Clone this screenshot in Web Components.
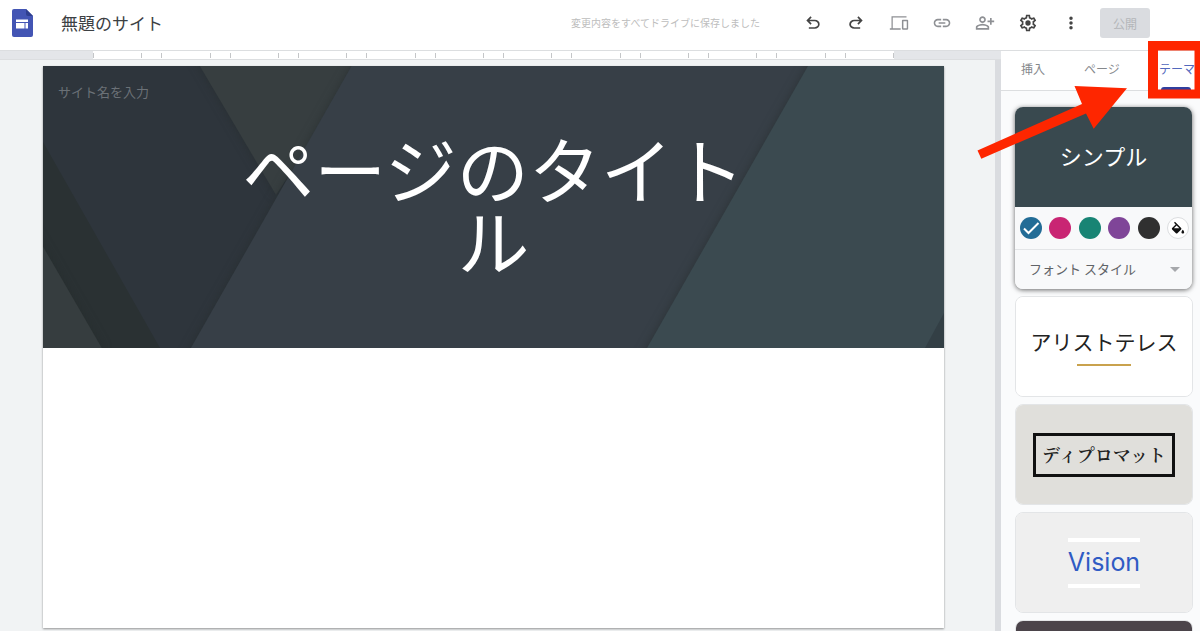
<!DOCTYPE html>
<html lang="ja">
<head>
<meta charset="utf-8">
<title>無題のサイト</title>
<style>
html, body { margin: 0; height: 100%; }
body { overflow: hidden; font-family: "Noto Sans CJK JP", "Noto Sans", sans-serif; color: #3c4043; background: #f1f3f4; }
</style>
</head>
<body>
<sites-app></sites-app>
<script>
const define = (name, html, setup) => customElements.define(name, class extends HTMLElement {
  constructor() {
    super();
    this.attachShadow({ mode: 'open' }).innerHTML = '<style>*{box-sizing:border-box}button,input,select{font-family:inherit;margin:0}</style>' + html;
  }
  connectedCallback() { if (setup) setup(this, this.shadowRoot); }
});

const ICONS = {
  undo: ['0 -960 960 960', 'M280-200v-80h284q63 0 109.5-40T720-420q0-60-46.5-100T564-560H312l104 104-56 56-200-200 200-200 56 56-104 104h252q97 0 169.5 63T800-420q0 94-72.5 157T564-200H280Z'],
  redo: ['0 -960 960 960', 'M396-200q-97 0-169.500-63T154-420q0-94 72.500-157T396-640h252L544-744l56-56 200 200-200 200-56-56 104-104H396q-63 0-109.500 40T240-420q0 60 46.500 100T396-280h284v80H396Z'],
  preview: ['0 0 24 24', 'M4.500 5.500H21V4H3v14.200H1V20h13v-1.800H4.500ZM22 8h-5.500c-.6 0-1 .4-1 1v10c0 .6.4 1 1 1H22c.6 0 1-.4 1-1V9c0-.6-.4-1-1-1Zm-.7 10.200h-4V9.800h4Z'],
  link: ['0 0 24 24', 'M3.9 12c0-1.710 1.390-3.100 3.100-3.100h4V7H7c-2.760 0-5 2.240-5 5s2.240 5 5 5h4v-1.900H7c-1.710 0-3.100-1.390-3.100-3.100zM8 13h8v-2H8v2zm9-6h-4v1.900h4c1.710 0 3.100 1.390 3.100 3.100s-1.390 3.100-3.100 3.100h-4V17h4c2.760 0 5-2.240 5-5s-2.240-5-5-5z'],
  share: ['0 -960 960 960', 'M720-400v-120H600v-80h120v-120h80v120h120v80H800v120h-80Zm-360-80q-66 0-113-47t-47-113q0-66 47-113t113-47q66 0 113 47t47 113q0 66-47 113t-113 47ZM40-160v-112q0-34 17.500-62.500T104-378q62-31 126-46.500T360-440q66 0 130 15.500T616-378q29 15 46.500 43.500T680-272v112H40Zm80-80h480v-32q0-11-5.500-20T580-306q-54-27-109-40.500T360-360q-56 0-111 13.500T140-306q-9 5-14.500 14t-5.500 20v32Zm240-320q33 0 56.500-23.500T440-640q0-33-23.500-56.500T360-720q-33 0-56.500 23.500T280-640q0 33 23.500 56.500T360-560Z'],
  settings: ['0 0 24 24', 'M19.430 12.980c.04-.32.07-.64.07-.98 0-.34-.03-.66-.07-.98l2.110-1.650c.19-.15.24-.42.12-.64l-2-3.460c-.09-.16-.26-.25-.44-.25-.06 0-.12.01-.17.03l-2.490 1c-.52-.4-1.080-.73-1.690-.98l-.38-2.650C14.460 2.180 14.250 2 14 2h-4c-.25 0-.46.18-.49.42l-.38 2.650c-.61.25-1.170.59-1.690.98l-2.490-1c-.06-.02-.12-.03-.18-.03-.17 0-.34.09-.43.25l-2 3.460c-.13.22-.07.49.12.64l2.110 1.650c-.04.32-.07.65-.07.98 0 .33.03.66.07.98l-2.110 1.650c-.19.15-.24.42-.12.64l2 3.460c.09.16.26.25.44.25.06 0 .12-.01.17-.03l2.490-1c.52.4 1.080.73 1.690.98l.38 2.650c.03.24.24.42.49.42h4c.25 0 .46-.18.49-.42l.38-2.650c.61-.25 1.170-.59 1.690-.98l2.490 1c.06.02.12.03.18.03.17 0 .34-.09.43-.25l2-3.460c.12-.22.07-.49-.12-.64l-2.110-1.650zm-1.980-1.710c.04.31.05.52.05.73 0 .21-.02.43-.05.73l-.14 1.130.89.7 1.080.84-.7 1.210-1.270-.51-1.040-.42-.9.68c-.43.32-.84.56-1.250.73l-1.060.43-.16 1.130-.2 1.350h-1.400l-.19-1.350-.16-1.130-1.060-.43c-.43-.18-.83-.41-1.230-.71l-.91-.7-1.060.43-1.270.51-.7-1.210 1.080-.84.89-.7-.14-1.130c-.03-.31-.05-.54-.05-.74s.02-.43.05-.73l.14-1.130-.89-.7-1.080-.84.7-1.210 1.270.51 1.040.42.9-.68c.43-.32.84-.56 1.250-.73l1.060-.43.16-1.130.2-1.350h1.390l.19 1.350.16 1.130 1.060.43c.43.18.83.41 1.230.71l.91.7 1.060-.43 1.270-.51.7 1.210-1.070.85-.89.7.14 1.130zM12 8.800a3.200 3.200 0 1 0 0 6.400a3.200 3.200 0 0 0 0-6.400z'],
  more: ['0 0 24 24', 'M12 8.300a2.100 2.100 0 1 0 0-4.200a2.100 2.100 0 0 0 0 4.200zm0 1.600a2.100 2.100 0 1 0 0 4.200a2.100 2.100 0 0 0 0-4.200zm0 5.800a2.100 2.100 0 1 0 0 4.200a2.100 2.100 0 0 0 0-4.200z']
};

define('icon-button', `
<style>
:host { display: block; width: 20px; height: 20px; color: #444; }
:host([muted]) { color: #8e9094; }
button { display: block; width: 100%; height: 100%; padding: 0; border: 0; background: none; color: inherit; }
svg { display: block; width: 100%; height: 100%; fill: currentColor; }
</style>
<button type="button"><svg aria-hidden="true"><path/></svg></button>`, (el, root) => {
  const [box, d] = ICONS[el.getAttribute('icon')];
  root.querySelector('svg').setAttribute('viewBox', box);
  root.querySelector('path').setAttribute('d', d);
  root.querySelector('button').setAttribute('aria-label', el.getAttribute('label'));
});

define('top-bar', `
<style>
:host { display: flex; align-items: center; height: 51px; padding: 0 50px 4px 12px; background: #fff; border-bottom: 1px solid #dcdee0; box-sizing: border-box; flex: none; }
.logo { width: 21px; height: 28px; flex: none; }
input { flex: 1; min-width: 0; margin-left: 28px; padding: 0; border: 0; background: none; font-size: 17px; line-height: 26px; color: #3c4043; outline: 0; }
.status { font-size: 10px; line-height: 16px; color: #bdbdbd; margin-right: 43px; white-space: nowrap; }
.tools { display: flex; gap: 23px; margin-right: 19px; }
.publish { width: 50px; height: 30px; padding: 0; border: 0; border-radius: 3px; background: #dadce0; color: #b4b6b9; font-size: 12px; }
</style>
<svg class="logo" viewBox="0 0 21 28" role="img" aria-label="サイト">
  <path fill="#4355b4" d="M2 0H14L21 7V26a2 2 0 0 1-2 2H2a2 2 0 0 1-2-2V2a2 2 0 0 1 2-2Z"/>
  <path fill="#2f3f8f" d="M14 0l7 7h-5a2 2 0 0 1-2-2Z"/>
  <path fill="#fff" d="M4 10.500H16V13H4ZM4 14H12.500V19.500H4ZM13.500 14H16V19.500H13.500Z"/>
</svg>
<input type="text" value="無題のサイト" aria-label="サイトのドキュメント名">
<span class="status">変更内容をすべてドライブに保存しました</span>
<div class="tools">
  <icon-button icon="undo" label="元に戻す"></icon-button>
  <icon-button icon="redo" label="やり直す"></icon-button>
  <icon-button muted icon="preview" label="プレビュー"></icon-button>
  <icon-button muted icon="link" label="リンクをコピー"></icon-button>
  <icon-button muted icon="share" label="共有"></icon-button>
  <icon-button icon="settings" label="設定"></icon-button>
  <icon-button icon="more" label="その他"></icon-button>
</div>
<button class="publish" type="button" disabled>公開</button>`);

define('column-ruler', `
<style>
:host { display: block; flex: none; height: 9px; padding: 0 107px 0 93px; background: #e4e6e9; border-bottom: 1px solid #dcdee0; box-sizing: border-box; }
div { display: grid; grid-template-columns: repeat(12, 1fr); column-gap: 19px; align-items: center; height: 8px; background: #fff; }
i { height: 5px; border: solid #c4c6c8; border-width: 0 1px; }
</style>
<div>${'<i></i>'.repeat(12)}</div>`);

define('site-hero', `
<style>
:host { display: grid; position: relative; background: #373f47; color: #fff; padding: 16px 15px 73px; }
svg { position: absolute; inset: 0; width: 100%; height: 100%; }
input { position: relative; justify-self: start; width: 160px; padding: 0; border: 0; background: none; color: #fff; font-size: 13px; line-height: 20px; outline: 0; }
input::placeholder { color: #6b7177; opacity: 1; }
h1 { position: relative; justify-self: center; width: 512px; margin: 29px 0 0; font-size: 72px; line-height: 72px; font-weight: 400; text-align: center; word-break: break-all; }
</style>
<svg viewBox="0 0 901 282" preserveAspectRatio="none" aria-hidden="true">
  <defs><filter id="s" filterUnits="userSpaceOnUse" x="-60" y="-60" width="1020" height="400" color-interpolation-filters="sRGB"><feDropShadow dx="0" dy="0" stdDeviation="5" flood-color="#252b2c" flood-opacity=".6"/></filter></defs>
  <path fill="#2e353c" d="M0 0H310V282H0Z"/>
  <path fill="#2a3133" d="M0 76L117 282H0Z"/>
  <path fill="#363d3f" filter="url(#s)" d="M-20 146L60 284H-20Z"/>
  <path fill="#373e40" filter="url(#s)" d="M145-20H330L233 129Z"/>
  <path fill="#373f47" filter="url(#s)" d="M320-20H920V300H137.600Z"/>
  <path fill="#3b4a50" filter="url(#s)" d="M776.400-20H940V300H593.700Z"/>
  <path fill="#333f45" d="M901 247V282H882Z"/>
</svg>
<input type="text" placeholder="サイト名を入力" aria-label="サイト名を入力">
<h1>ページのタイトル</h1>`);

define('page-canvas', `
<style>
:host { display: flex; flex: 1; min-width: 0; min-height: 0; flex-direction: column; background: #f1f3f4; }
.scroll { display: flex; flex: 1; min-height: 0; padding: 6px 51px 3px 43px; border-right: 6px solid #dadce0; }
article { flex: 1; min-width: 0; background: #fff; box-shadow: 0 1px 2px #0006; }
</style>
<column-ruler></column-ruler>
<div class="scroll"><article><site-hero></site-hero></article></div>`);

define('theme-card', `
<style>
:host { display: block; flex: none; border-radius: 8px; overflow: hidden; border: 1px solid #e3e5e7; box-sizing: border-box; }
:host([selected]) { border: 0; box-shadow: 0 1px 5px #0009; }
button { display: flex; flex-direction: column; align-items: center; justify-content: center; width: 100%; height: 99px; padding: 0 0 4px; border: 0; background: var(--bg, #fff); color: var(--fg, #222); font-size: var(--size, 21px); line-height: 30px; }
:host([selected]) button { height: 100px; }
</style>
<button type="button"><slot></slot></button><slot name="options"></slot>`);

define('theme-options', `
<style>
:host { display: block; background: #f8f9fa; }
fieldset { display: flex; justify-content: space-between; align-items: center; height: 43px; margin: 0; padding: 0 3px 0 5px; border: 0; border-bottom: 1px solid #e3e5e7; min-width: 0; }
label { position: relative; display: block; width: 22px; height: 22px; }
input { appearance: none; display: block; width: 22px; height: 22px; border-radius: 50%; background: var(--c); border: 1px solid var(--b, transparent); background-clip: border-box; background-origin: border-box; }
svg { position: absolute; inset: 0; width: 22px; height: 22px; pointer-events: none; }
.font { position: relative; display: flex; align-items: center; height: 39px; }
select { appearance: none; width: 100%; height: 100%; padding: 0 14px 2px; border: 0; background: none; color: #606367; font-size: 13px; }
.font svg { inset: auto 12px auto auto; width: 10px; height: 5px; fill: #a6a8ab; }
</style>
<fieldset aria-label="テーマの色">
  <label style="--c:#226c96"><input type="radio" name="c" checked aria-label="青"><svg viewBox="0 0 22 22"><path d="M4 11.500l4.500 4.500L18.500 6" fill="none" stroke="#fff" stroke-width="2"/></svg></label>
  <label style="--c:#c92573"><input type="radio" name="c" aria-label="ピンク"></label>
  <label style="--c:#188474"><input type="radio" name="c" aria-label="緑"></label>
  <label style="--c:#7f4598"><input type="radio" name="c" aria-label="紫"></label>
  <label style="--c:#303030"><input type="radio" name="c" aria-label="黒"></label>
  <label style="--c:#fff;--b:#dcdee0"><input type="radio" name="c" aria-label="カスタム"><svg viewBox="-4 -4 32 32"><path d="M16.560 8.940L7.620 0 6.210 1.410l2.380 2.380-5.150 5.150c-.59.59-.59 1.540 0 2.120l5.500 5.500c.29.29.68.44 1.060.44s.77-.15 1.060-.44l5.500-5.500c.59-.58.59-1.530 0-2.120zM6 9.500L10 5.500 14 9.500ZM19 11.500s-2 2.170-2 3.500c0 1.100.9 2 2 2s2-.9 2-2c0-1.330-2-3.500-2-3.500z" transform="translate(0 3)" fill="#111"/></svg></label>
</fieldset>
<div class="font"><select aria-label="フォント スタイル"><option>フォント スタイル</option></select><svg viewBox="0 0 10 5" aria-hidden="true"><path d="M0 0h10L5 5Z"/></svg></div>`);

define('callout-arrow', `
<style>
:host { position: absolute; right: 0; top: -10px; width: 223px; height: 120px; pointer-events: none; }
svg { display: block; width: 100%; height: 100%; fill: #fe2600; }
</style>
<svg viewBox="977 41 223 120" aria-hidden="true">
  <path fill-rule="evenodd" d="M1148 41H1200V98.500H1148ZM1158 50.500V89.500H1194.500V50.500Z"/>
  <path d="M977.500 150.500L1082 104L1074.500 86L1127 88.300L1093.700 128.700L1086 113.500L981.300 158.700Z"/>
</svg>`);

define('theme-panel', `
<style>
:host { display: flex; flex-direction: column; position: relative; flex: none; width: 199px; background: #fafbfc; }
nav { display: flex; flex: none; height: 40px; background: #fff; border-bottom: 1px solid #dcdee0; padding-left: 6px; }
nav button { flex: none; width: 52px; padding: 0 0 4px; border: 0; background: none; font-size: 12px; color: #85888c; }
nav button:nth-child(2) { width: 86px; }
nav button[aria-selected=true] { position: relative; width: 55px; padding-left: 14px; color: #5268bd; text-align: left; white-space: nowrap; }
nav button[aria-selected=true]::after { content: ""; position: absolute; left: 16px; right: 9px; bottom: 0; height: 3px; border-radius: 3px 3px 0 0; background: #303f9f; }
.list { display: flex; flex: 1; min-height: 0; flex-direction: column; gap: 7px; padding: 16px 7px 0 14px; overflow: hidden; }
.simple { --bg: #39494f; --fg: #fff; --size: 22px; margin-right: 1px; }
.gold { width: 54px; height: 2px; margin: 8px 0 -2px; background: #c9a24d; }
.diplomat { --bg: #e0dfdb; --size: 18px; }
.frame { margin-top: 4px; padding: 3px 6px 5px; border: 3px solid #111; font-family: "Noto Serif CJK JP", "Noto Sans CJK JP", serif; font-weight: 600; }
.vision { --bg: #efefef; --fg: #2f5bc4; --size: 25px; }
.bars { margin-top: 4px; padding: 5px 0 7px; border: solid #fff; border-width: 4px 0; font-family: Inter, sans-serif; font-weight: 400; }
.dark { --bg: #4b444a; }
</style>
<nav role="tablist" aria-label="パネル">
  <button type="button" role="tab">挿入</button>
  <button type="button" role="tab">ページ</button>
  <button type="button" role="tab" aria-selected="true">テーマ</button>
</nav>
<div class="list">
  <theme-card class="simple" selected>シンプル<theme-options slot="options"></theme-options></theme-card>
  <theme-card>アリストテレス<span class="gold"></span></theme-card>
  <theme-card class="diplomat"><span class="frame">ディプロマット</span></theme-card>
  <theme-card class="vision"><span class="bars">Vision</span></theme-card>
  <theme-card class="dark"></theme-card>
</div>
<callout-arrow></callout-arrow>`);

define('sites-app', `
<style>
:host { display: flex; flex-direction: column; height: 100vh; }
main { display: flex; flex: 1; min-height: 0; }
</style>
<top-bar></top-bar>
<main><page-canvas></page-canvas><theme-panel></theme-panel></main>`);
</script>
</body>
</html>
